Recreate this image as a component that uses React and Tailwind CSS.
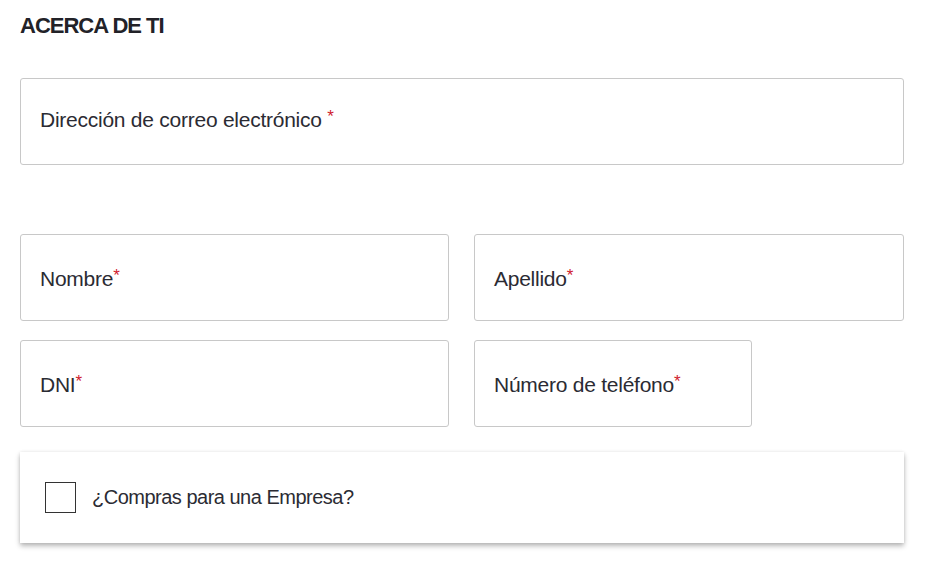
import React from "react";

function Field({ label, space = false, className = "", pad = "pt-[2px]" }) {
  return (
    <div
      className={`h-[87px] flex items-center pl-[19px] border border-[#c8c8c8] rounded-[3px] bg-white ${className}`}
    >
      <span className={`text-[21px] text-[#2b2b33] tracking-[-0.25px] leading-none ${pad}`}>
        {label}
        {space ? " " : ""}
        <span className="text-[#d0202e] text-[17px] relative top-[-5px]">*</span>
      </span>
    </div>
  );
}

export default function App() {
  return (
    <div
      className="w-[927px] h-[573px] bg-white px-[20px] pt-[13px] overflow-hidden"
      style={{ fontFamily: '"Liberation Sans", Arial, sans-serif' }}
    >
      <h2 className="text-[22px] font-bold text-[#222228] tracking-[-1px] leading-[26px]">
        ACERCA DE TI
      </h2>
      <div className="w-[884px] mt-[39px] flex flex-col">
        <Field label="Dirección de correo electrónico" space pad="pb-[4px]" />
        <div className="mt-[69px] grid grid-cols-[429px_430px] gap-x-[25px] gap-y-[19px]">
          <Field label="Nombre" />
          <Field label="Apellido" />
          <Field label="DNI" />
          <Field label="Número de teléfono" className="w-[278px]" />
        </div>
        <div className="mt-[25px] h-[91px] bg-white flex items-center pl-[25px] shadow-[0_3px_5px_rgba(0,0,0,0.28),0_0_3px_rgba(0,0,0,0.08)]">
          <div className="w-[31px] h-[31px] border border-[#333] bg-white shrink-0" />
          <span className="ml-[16px] text-[20px] text-[#2b2b33] tracking-[-0.5px] pb-[2px]">
            ¿Compras para una Empresa?
          </span>
        </div>
      </div>
    </div>
  );
}
